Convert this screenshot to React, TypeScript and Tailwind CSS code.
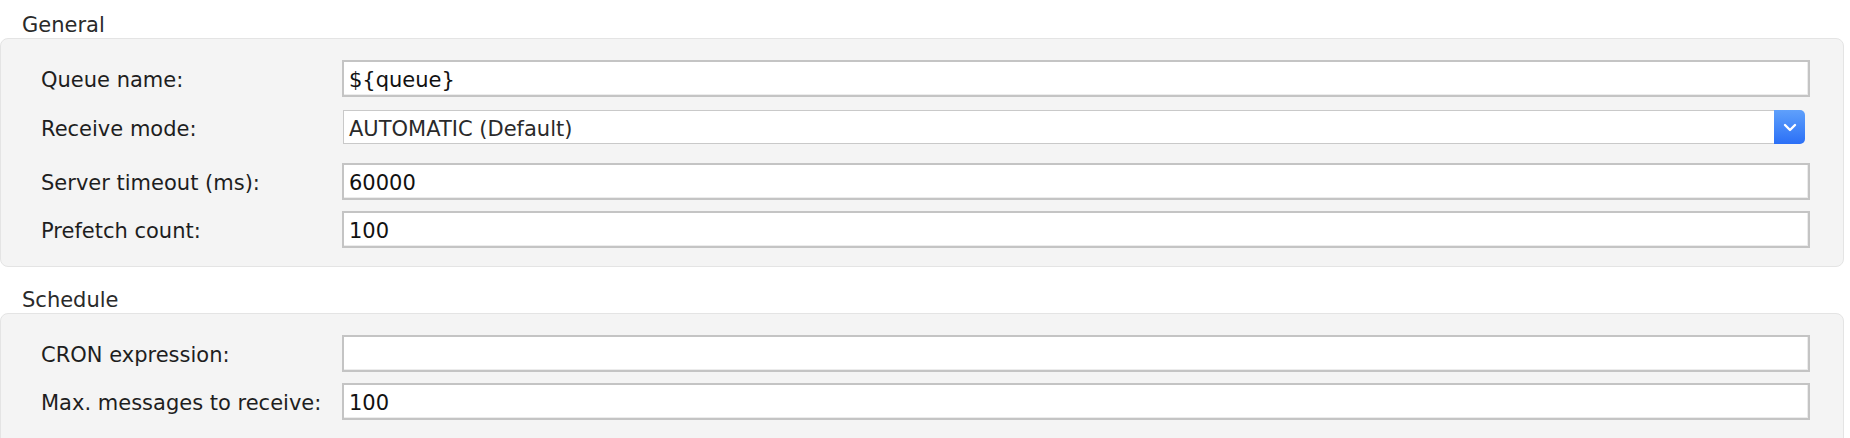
import React from "react";

const font = { fontFamily: '"DejaVu Sans", Verdana, sans-serif' };

function TextRow({ label, value, className = "" }: { label: string; value: string; className?: string }) {
  return (
    <div className={`flex items-center ${className}`}>
      <div className="w-[301px] shrink-0 pt-[3px] text-[21px] leading-[24px] text-[#1e1e1e]">{label}</div>
      <div className="flex-1 h-[37px] bg-white border-2 border-[#c4c4c4] shadow-[inset_-1px_-1px_0_#ececec] flex items-center pl-[5px] pt-[3px] text-[21px] leading-[24px] text-[#111]">
        {value}
      </div>
    </div>
  );
}

function SelectRow({ label, value, className = "" }: { label: string; value: string; className?: string }) {
  return (
    <div className={`flex items-center ${className}`}>
      <div className="w-[301px] shrink-0 pt-[3px] text-[21px] leading-[24px] text-[#1e1e1e]">{label}</div>
      <div className="flex-1 flex h-[34px] pl-[1px] pr-[5px]">
        <div className="flex-1 bg-white border border-r-0 border-[#c9c9c9] flex items-center pl-[5px] pt-[3px] text-[21px] leading-[24px] text-[#2a2a2a]">
          {value}
        </div>
        <div className="w-[31px] rounded-r-[5px] bg-gradient-to-b from-[#5fa0fb] to-[#2b6ff6] flex items-center justify-center">
          <svg width="14" height="9" viewBox="0 0 14 9" fill="none">
            <path d="M2 2 L7 7 L12 2" stroke="white" strokeWidth="2.4" strokeLinecap="round" strokeLinejoin="round" />
          </svg>
        </div>
      </div>
    </div>
  );
}

export default function App() {
  return (
    <div className="w-[1850px] h-[438px] overflow-hidden bg-white" style={font}>
      {/* General */}
      <div className="h-[38px] pt-[13px] pl-[22px] text-[21px] leading-[24px] text-[#2a2a2a]">General</div>
      <div className="mr-[6px] bg-[#f4f4f4] border border-[#e4e4e4] rounded-[8px] pl-[40px] pr-[33px] pt-[21px] pb-[18px]">
        <TextRow label="Queue name:" value="${queue}" />
        <SelectRow label="Receive mode:" value="AUTOMATIC (Default)" className="mt-[13px]" />
        <TextRow label="Server timeout (ms):" value="60000" className="mt-[19px]" />
        <TextRow label="Prefetch count:" value="100" className="mt-[11px]" />
      </div>

      {/* Schedule */}
      <div className="h-[46px] pt-[21px] pl-[22px] text-[21px] leading-[24px] text-[#2a2a2a]">Schedule</div>
      <div className="mr-[6px] bg-[#f4f4f4] border border-[#e4e4e4] rounded-[8px] pl-[40px] pr-[33px] pt-[21px] pb-[30px]">
        <TextRow label="CRON expression:" value="" />
        <TextRow label="Max. messages to receive:" value="100" className="mt-[11px]" />
      </div>
    </div>
  );
}
